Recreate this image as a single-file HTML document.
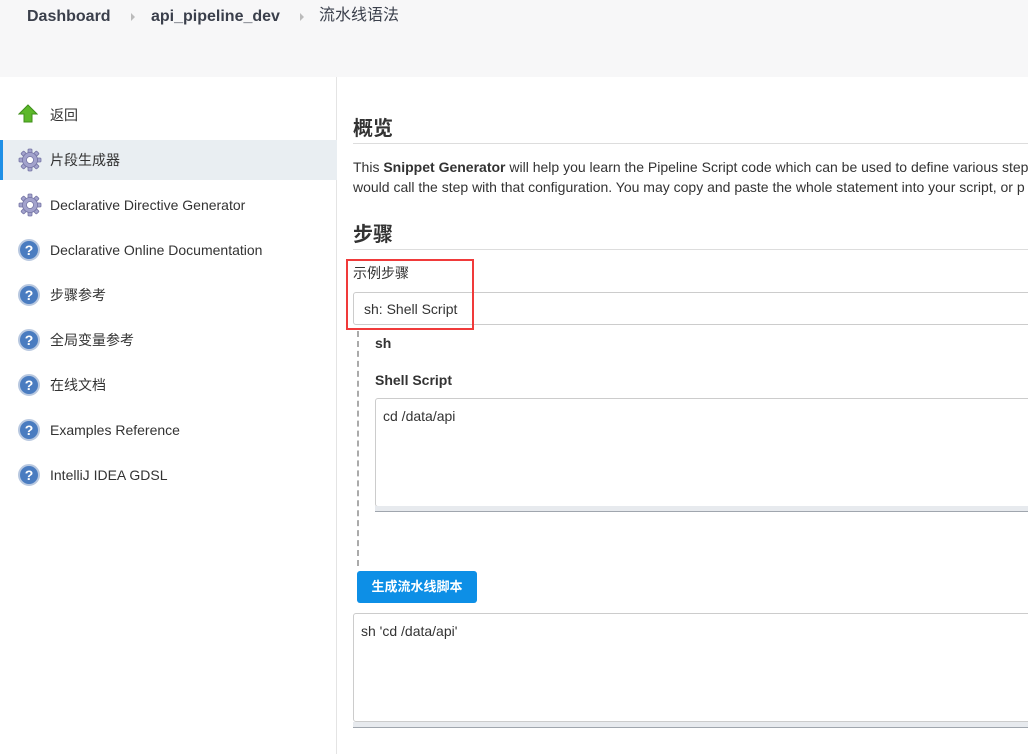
<!DOCTYPE html>
<html><head><meta charset="utf-8"><style>
*{box-sizing:border-box;margin:0;padding:0}
body{width:1028px;height:754px;overflow:hidden;background:#fff;font-family:"Liberation Sans","Noto Sans CJK SC",sans-serif;color:#333;font-size:14px;position:relative}
.hdr{position:absolute;left:0;top:0;width:1028px;height:77px;background:#f7f7f8}
.bc{position:absolute;top:7px;height:20px;line-height:20px;font-size:16px;font-weight:bold;color:#3a3f4b}
.arr{position:absolute;top:13px;width:0;height:0;border-left:4px solid #bbb;border-top:4px solid transparent;border-bottom:4px solid transparent}
.side{position:absolute;left:0;top:77px;width:337px;height:677px;border-right:1px solid #e4e4e4}
.it{position:absolute;left:0;width:337px;height:40px;line-height:40px;padding-left:50px;font-size:14px;color:#333}
.it svg{position:absolute;left:18px;top:9px}
.act{background:#e9eef2;border-left:3px solid #1e8fe6}
.abs{position:absolute}
h2{position:absolute;left:353px;font-size:20px;font-weight:bold;color:#333;width:700px;border-bottom:1px solid #ddd}
</style></head><body>
<div class="hdr">
<div class="bc" style="left:27px">Dashboard</div>
<div class="arr" style="left:131px"></div>
<div class="bc" style="left:151px">api_pipeline_dev</div>
<div class="arr" style="left:300px"></div>
<div class="bc" style="left:319px;font-weight:normal;top:6px">流水线语法</div>
</div>
<div class="side">
<div class="it" style="top:18px"><svg width="20" height="20" viewBox="0 0 20 20"><path d="M10 1L19 10H14V18H6V10H1Z" fill="#5cb82a" stroke="#3f8f1a"/></svg>返回</div>
<div class="it act" style="top:63px;padding-left:47px"><svg style="left:15px;top:8px" width="24" height="24" viewBox="0 0 24 24"><g fill="#a2a2cc" stroke="#7575a5" stroke-width="0.8"><g id="t"><rect x="10" y="1" width="4" height="22" rx="1"/><rect x="10" y="1" width="4" height="22" rx="1" transform="rotate(45 12 12)"/><rect x="10" y="1" width="4" height="22" rx="1" transform="rotate(90 12 12)"/><rect x="10" y="1" width="4" height="22" rx="1" transform="rotate(135 12 12)"/></g><circle cx="12" cy="12" r="7.5"/></g><circle cx="12" cy="12" r="3.5" fill="#fff" stroke="#7575a5" stroke-width="0.8"/></svg>片段生成器</div>
<div class="it" style="top:108px"><svg style="left:18px;top:8px" width="24" height="24" viewBox="0 0 24 24"><g fill="#a2a2cc" stroke="#7575a5" stroke-width="0.8"><rect x="10" y="1" width="4" height="22" rx="1"/><rect x="10" y="1" width="4" height="22" rx="1" transform="rotate(45 12 12)"/><rect x="10" y="1" width="4" height="22" rx="1" transform="rotate(90 12 12)"/><rect x="10" y="1" width="4" height="22" rx="1" transform="rotate(135 12 12)"/><circle cx="12" cy="12" r="7.5"/></g><circle cx="12" cy="12" r="3.5" fill="#fff" stroke="#7575a5" stroke-width="0.8"/></svg>Declarative Directive Generator</div>
<div class="it" style="top:153px"><svg width="22" height="22" viewBox="0 0 22 22"><circle cx="11" cy="11" r="10" fill="#4a7cc0" stroke="#b8c8e0" stroke-width="2"/><text x="11" y="16" font-size="14" font-weight="bold" fill="#fff" text-anchor="middle" font-family="Liberation Sans">?</text></svg>Declarative Online Documentation</div>
<div class="it" style="top:198px"><svg width="22" height="22" viewBox="0 0 22 22"><circle cx="11" cy="11" r="10" fill="#4a7cc0" stroke="#b8c8e0" stroke-width="2"/><text x="11" y="16" font-size="14" font-weight="bold" fill="#fff" text-anchor="middle" font-family="Liberation Sans">?</text></svg>步骤参考</div>
<div class="it" style="top:243px"><svg width="22" height="22" viewBox="0 0 22 22"><circle cx="11" cy="11" r="10" fill="#4a7cc0" stroke="#b8c8e0" stroke-width="2"/><text x="11" y="16" font-size="14" font-weight="bold" fill="#fff" text-anchor="middle" font-family="Liberation Sans">?</text></svg>全局变量参考</div>
<div class="it" style="top:288px"><svg width="22" height="22" viewBox="0 0 22 22"><circle cx="11" cy="11" r="10" fill="#4a7cc0" stroke="#b8c8e0" stroke-width="2"/><text x="11" y="16" font-size="14" font-weight="bold" fill="#fff" text-anchor="middle" font-family="Liberation Sans">?</text></svg>在线文档</div>
<div class="it" style="top:333px"><svg width="22" height="22" viewBox="0 0 22 22"><circle cx="11" cy="11" r="10" fill="#4a7cc0" stroke="#b8c8e0" stroke-width="2"/><text x="11" y="16" font-size="14" font-weight="bold" fill="#fff" text-anchor="middle" font-family="Liberation Sans">?</text></svg>Examples Reference</div>
<div class="it" style="top:378px"><svg width="22" height="22" viewBox="0 0 22 22"><circle cx="11" cy="11" r="10" fill="#4a7cc0" stroke="#b8c8e0" stroke-width="2"/><text x="11" y="16" font-size="14" font-weight="bold" fill="#fff" text-anchor="middle" font-family="Liberation Sans">?</text></svg>IntelliJ IDEA GDSL</div>
</div>
<h2 style="top:116px;height:28px;line-height:26px">概览</h2>
<div class="abs" style="left:353px;top:157px;width:675px;white-space:nowrap;overflow:hidden;line-height:20px;font-size:14px">This <b>Snippet Generator</b> will help you learn the Pipeline Script code which can be used to define various steps<br>would call the step with that configuration. You may copy and paste the whole statement into your script, or p</div>
<h2 style="top:222px;height:28px;line-height:26px">步骤</h2>
<div class="abs" style="left:353px;top:263px">示例步骤</div>
<div class="abs" style="left:353px;top:292px;width:690px;height:33px;border:1px solid #ccc;border-radius:3px;padding:8px 10px;line-height:16px">sh: Shell Script</div>
<div class="abs" style="left:346px;top:259px;width:128px;height:71px;border:2px solid #f03a3a"></div>
<div class="abs" style="left:357px;top:331px;height:235px;border-left:2px dashed #aaa"></div>
<div class="abs" style="left:375px;top:335px;font-weight:bold">sh</div>
<div class="abs" style="left:375px;top:372px;font-weight:bold">Shell Script</div>
<div class="abs" style="left:375px;top:398px;width:680px;height:109px;border:1px solid #ccc;border-radius:3px;padding:9px 7px">cd /data/api</div>
<div class="abs" style="left:375px;top:506px;width:660px;height:6px;background:#e7eaee;border-bottom:1px solid #a0a6ae"></div>
<div class="abs" style="left:357px;top:571px;width:120px;height:32px;background:#0d8fe6;border-radius:3px;color:#fff;font-weight:bold;font-size:13px;text-align:center;line-height:32px">生成流水线脚本</div>
<div class="abs" style="left:353px;top:613px;width:690px;height:109px;border:1px solid #ccc;border-radius:3px;padding:9px 7px">sh 'cd /data/api'</div>
<div class="abs" style="left:353px;top:722px;width:680px;height:6px;background:#e7eaee;border-bottom:1px solid #a0a6ae"></div>
</body></html>
